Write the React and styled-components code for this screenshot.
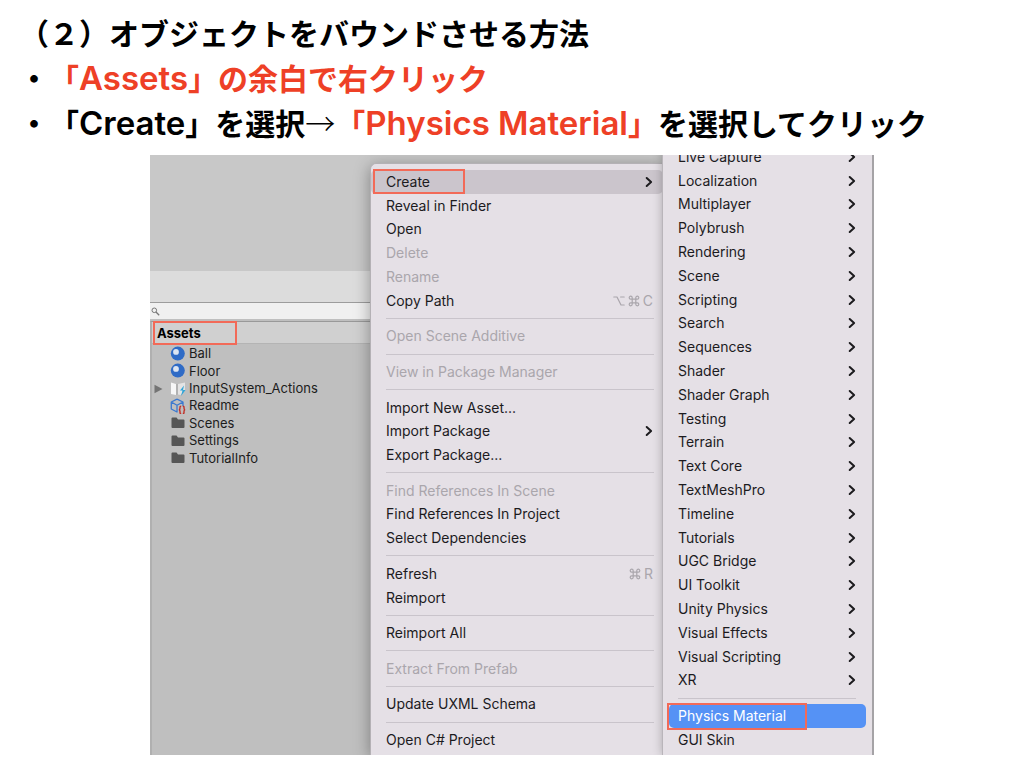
import React from "react";
import styled, { createGlobalStyle, css } from "styled-components";

const GlobalStyle = createGlobalStyle`
  *, *::before, *::after { box-sizing: border-box; }
  body {
    margin: 0;
    background: #fff;
    color: #000;
    font-family: "Inter", "Noto Sans CJK JP", sans-serif;
  }
`;

const RED = "#ee4026";
const MARK = "#f26a58";

const Slide = styled.main`
  padding: 10px 19px 13px;
`;

const headingText = css`
  margin: 0;
  font-family: "Noto Sans CJK JP", sans-serif;
  font-size: 30px;
  line-height: 45px;
  font-weight: 700;
`;

const Title = styled.h1`
  ${headingText}
`;

const Steps = styled.ul`
  ${headingText}
  padding: 0;
  list-style: none;
`;

const Step = styled.li`
  display: flex;
  height: 45px;

  &::before {
    content: "・";
  }
`;

const Accent = styled.span`
  color: ${RED};
`;

const Latin = styled.span`
  font-family: "Inter", sans-serif;
  font-weight: 600;
  font-size: 33px;
  line-height: 33px;
`;

const Arrow = styled.span`
  font-weight: 300;
`;

const Figure = styled.section`
  display: grid;
  grid-template-columns: 220px 293px 1fr;
  max-width: 724px;
  height: 600px;
  margin: 10px auto 0;
  overflow: hidden;
  background: #c6c6c6;
`;

const Editor = styled.div`
  display: flex;
  flex-direction: column;
  min-width: 0;
  background: #bfbfbf;
`;

const SceneArea = styled.div`
  height: 116px;
  background: #c8c8c8;
`;

const Toolbar = styled.div`
  height: 31px;
  background: #dcdcdc;
`;

const SearchBar = styled.label`
  display: flex;
  align-items: center;
  height: 17px;
  padding-left: 1px;
  border-top: 1px solid #9c9c9c;
  background: #f0f0f0;
`;

const SearchInput = styled.input`
  flex: 1;
  min-width: 0;
  height: 14px;
  padding: 0 4px;
  border: 0;
  outline: 0;
  background: transparent;
  font: 12px "Inter", sans-serif;
`;

const Browser = styled.div`
  flex: 1;
  margin-top: 2px;
  border-top: 1px solid #999;
  border-left: 2px solid #b0b0b0;
`;

const marked = css`
  position: relative;

  &::after {
    content: "";
    position: absolute;
    top: ${(p) => p.$mark.top}px;
    left: ${(p) => p.$mark.left}px;
    width: ${(p) => p.$mark.width}px;
    height: ${(p) => p.$mark.height}px;
    border: 2px solid ${MARK};
    z-index: 2;
  }
`;

const FolderName = styled.h2`
  ${marked}
  margin: 0;
  padding-left: 5px;
  height: 22px;
  border-bottom: 1px solid #b4b4b4;
  background: #d0d0d0;
  font-size: 13px;
  line-height: 22px;
  font-weight: 700;
`;

const AssetList = styled.ul`
  display: flex;
  flex-direction: column;
  height: 122px;
  margin: 1px 0 0;
  padding: 0;
  list-style: none;
`;

const Asset = styled.li`
  display: grid;
  grid-template-columns: 18px 19px 1fr;
  align-items: center;
  flex: 1 1 0;
  min-height: 0;
  color: #1c1c1c;
  font-size: 13px;
  line-height: 17px;

  svg {
    display: block;
  }
`;

const Expander = styled.span`
  padding-left: 2px;
`;

const menuPanel = css`
  display: flex;
  flex-direction: column;
  z-index: ${(p) => p.$level};
  background: #e5e0e6;
`;

const ContextMenu = styled.div`
  ${menuPanel}
  margin-top: 8px;
  padding: 6px 0 3px;
  border-left: 1px solid #b4b1b5;
  border-top: 1px solid #b4b1b5;
  border-top-left-radius: 6px;
  box-shadow: 0 3px 16px rgba(0, 0, 0, 0.35);
`;

const SubMenu = styled.div`
  ${menuPanel}
  margin-top: -10px;
  padding-bottom: 3px;
  border-right: 2px solid #a5a3a6;
  box-shadow: 0 0 0 1px #b9b5ba, 0 0 10px rgba(0, 0, 0, 0.3);
`;

const Item = styled.button`
  ${(p) => p.$mark && marked}
  display: flex;
  align-items: center;
  justify-content: space-between;
  flex: 2 1 0;
  min-height: 0;
  margin: 0 ${(p) => (p.$wide ? 6 : 0)}px;
  padding: 0 10px 0 ${(p) => (p.$wide ? 9 : 15)}px;
  border: 0;
  border-radius: 5px;
  background: ${(p) => (p.$selected ? "#5592f5" : p.$open ? "#cbc5cc" : "transparent")};
  color: ${(p) => (p.$selected ? "#fff" : "#1c1b1e")};
  font-family: "Inter", sans-serif;
  font-size: 14px;
  line-height: 18px;
  font-weight: 400;
  text-align: left;
  white-space: nowrap;

  &:disabled {
    color: #aaa6ac;
  }
`;

const Divider = styled.div`
  display: flex;
  align-items: center;
  flex: 1 1 0;
  margin: 0 ${(p) => (p.$wide ? 16 : 9)}px 0 15px;

  &::before {
    content: "";
    flex: 1;
    height: 1px;
    background: #c9c4cb;
  }
`;

const Shortcut = styled.span`
  display: flex;
  align-items: center;
  gap: 3px;
  color: #aaa6ac;
`;

const strokeProps = {
  fill: "none",
  stroke: "currentColor",
  strokeLinecap: "round",
  strokeLinejoin: "round",
};

const Chevron = () => (
  <svg width="9" height="12" viewBox="0 0 9 12" aria-hidden="true" {...strokeProps} strokeWidth="2">
    <path d="M2.700 2 7.100 6 2.700 10" />
  </svg>
);

const OptionKey = () => (
  <svg width="12" height="12" viewBox="0 0 12 12" role="img" aria-label="Option" {...strokeProps} strokeWidth="1.2">
    <path d="M.8 2H4l4 8h3.2M7.6 2h3.6" />
  </svg>
);

const CommandKey = () => (
  <svg width="12" height="12" viewBox="0 0 12 12" role="img" aria-label="Command" {...strokeProps} strokeWidth="1.2">
    <path d="M4.2 4.2h3.6v3.6H4.2zM4.2 4.2H2.7a1.5 1.5 0 1 1 1.5-1.5zM7.8 4.2V2.7a1.5 1.5 0 1 1 1.5 1.5zM7.8 7.8h1.5a1.5 1.5 0 1 1-1.5 1.5zM4.2 7.8v1.5a1.5 1.5 0 1 1-1.5-1.5z" />
  </svg>
);

const SearchIcon = () => (
  <svg width="9" height="9" viewBox="0 0 9 9" fill="none" stroke="#777" aria-hidden="true">
    <circle cx="3.3" cy="3.3" r="2.3" />
    <path d="M5 5l3.2 3.2" strokeWidth="1.3" />
  </svg>
);

const Triangle = () => (
  <svg width="9" height="10" viewBox="0 0 9 10" aria-hidden="true">
    <path d="M.5.8 8.5 5 .5 9.2z" fill="#747474" />
  </svg>
);

const MaterialIcon = () => (
  <svg width="16" height="16" viewBox="0 0 16 16" aria-hidden="true">
    <circle cx="7.8" cy="7.6" r="7" fill="#2f6bc6" />
    <circle cx="6" cy="5.9" r="2.9" fill="#dce5f2" />
  </svg>
);

const ActionsIcon = () => (
  <svg width="16" height="16" viewBox="0 0 16 16" aria-hidden="true">
    <path d="M1 1.5 6 3v11l-5-1z" fill="#f7f7f7" />
    <path d="M6 3h2v10.5L6 14z" fill="#b2b2b2" />
    <path d="M8 3l7-1.5V9l-4.500 5L8 13.500z" fill="#e4e4e4" />
    <path d="M14 4.500 10 9.500h2.500L11 15l4.500-6H13z" fill="#30a5d8" />
  </svg>
);

const ReadmeIcon = () => (
  <svg width="16" height="16" viewBox="0 0 16 16" fill="none" aria-hidden="true">
    <path
      d="M7 1.200 13 4v4M7 1.200 1.300 4v7L7 14V7.200M1.300 4 7 7.200 13 4"
      stroke="#3b78d0"
      strokeWidth="1.300"
      strokeLinejoin="round"
    />
    <path
      d="M11.200 8.200c-1.500 0-1.200.8-1.200 1.800s-.2 1.600-1 1.800c.8.2 1 .8 1 1.800s-.3 1.800 1.200 1.800M12.800 8.200c1.500 0 1.200.8 1.200 1.800s.2 1.600 1 1.800c-.8.2-1 .8-1 1.800s.3 1.800-1.200 1.800"
      stroke="#c13028"
      strokeWidth="1.400"
    />
  </svg>
);

const FolderIcon = () => (
  <svg width="16" height="16" viewBox="0 0 16 16" aria-hidden="true">
    <path d="M1.500 3.500q0-1 1-1h4l1.500 2h5.500q1 0 1 1V12q0 1-1 1h-11q-1 0-1-1z" fill="#565656" />
  </svg>
);

const assets = [
  { name: "Ball", Icon: MaterialIcon },
  { name: "Floor", Icon: MaterialIcon },
  { name: "InputSystem_Actions", Icon: ActionsIcon, expandable: true },
  { name: "Readme", Icon: ReadmeIcon },
  { name: "Scenes", Icon: FolderIcon },
  { name: "Settings", Icon: FolderIcon },
  { name: "TutorialInfo", Icon: FolderIcon },
];

const contextGroups = [
  [
    { label: "Create", submenu: true, open: true, mark: { top: -1, left: 2, width: 92, height: 25 } },
    { label: "Reveal in Finder" },
    { label: "Open" },
    { label: "Delete", disabled: true },
    { label: "Rename", disabled: true },
    { label: "Copy Path", keys: [<OptionKey key="o" />, <CommandKey key="c" />, "C"] },
  ],
  [{ label: "Open Scene Additive", disabled: true }],
  [{ label: "View in Package Manager", disabled: true }],
  [
    { label: "Import New Asset..." },
    { label: "Import Package", submenu: true },
    { label: "Export Package..." },
  ],
  [
    { label: "Find References In Scene", disabled: true },
    { label: "Find References In Project" },
    { label: "Select Dependencies" },
  ],
  [{ label: "Refresh", keys: [<CommandKey key="c" />, "R"] }, { label: "Reimport" }],
  [{ label: "Reimport All" }],
  [{ label: "Extract From Prefab", disabled: true }],
  [{ label: "Update UXML Schema" }],
  [{ label: "Open C# Project" }],
];

const createGroups = [
  [
    "Live Capture", "Localization", "Multiplayer", "Polybrush", "Rendering", "Scene",
    "Scripting", "Search", "Sequences", "Shader", "Shader Graph", "Testing", "Terrain",
    "Text Core", "TextMeshPro", "Timeline", "Tutorials", "UGC Bridge", "UI Toolkit",
    "Unity Physics", "Visual Effects", "Visual Scripting", "XR",
  ].map((label) => ({ label, submenu: true })),
  [
    { label: "Physics Material", selected: true, mark: { top: -1, left: -2, width: 140, height: 27 } },
    { label: "GUI Skin" },
  ],
];

function MenuItems({ groups, wide }) {
  return groups.map((group, index) => (
    <React.Fragment key={index}>
      {index > 0 && <Divider role="separator" $wide={wide} />}
      {group.map((item) => (
        <Item
          key={item.label}
          type="button"
          role="menuitem"
          disabled={item.disabled}
          $wide={wide}
          $open={item.open}
          $selected={item.selected}
          $mark={item.mark}
        >
          <span>{item.label}</span>
          {item.submenu && <Chevron />}
          {item.keys && <Shortcut>{item.keys}</Shortcut>}
        </Item>
      ))}
    </React.Fragment>
  ));
}

export default function App() {
  return (
    <>
      <GlobalStyle />
      <Slide>
        <Title>（２）オブジェクトをバウンドさせる方法</Title>
        <Steps>
          <Step>
            <Accent>「<Latin>Assets</Latin>」の余白で右クリック</Accent>
          </Step>
          <Step>
            <span>
              「<Latin>Create</Latin>」を選択<Arrow>→</Arrow>
              <Accent>「<Latin>Physics Material</Latin>」</Accent>を選択してクリック
            </span>
          </Step>
        </Steps>
        <Figure>
          <Editor>
            <SceneArea />
            <Toolbar />
            <SearchBar>
              <SearchIcon />
              <SearchInput type="search" aria-label="Search assets" />
            </SearchBar>
            <Browser>
              <FolderName $mark={{ top: -1, left: 1, width: 84, height: 24 }}>Assets</FolderName>
              <AssetList>
                {assets.map(({ name, Icon, expandable }) => (
                  <Asset key={name}>
                    <Expander>{expandable && <Triangle />}</Expander>
                    <Icon />
                    <span>{name}</span>
                  </Asset>
                ))}
              </AssetList>
            </Browser>
          </Editor>
          <ContextMenu role="menu" $level={1}>
            <MenuItems groups={contextGroups} />
          </ContextMenu>
          <SubMenu role="menu" aria-label="Create" $level={2}>
            <MenuItems groups={createGroups} wide />
          </SubMenu>
        </Figure>
      </Slide>
    </>
  );
}
